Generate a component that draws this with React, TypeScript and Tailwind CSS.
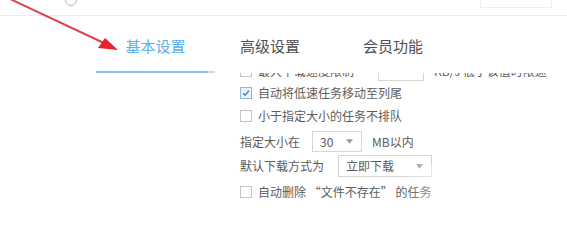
import React from "react";

const font = { fontFamily: '"Noto Sans CJK SC", "Noto Sans", sans-serif' };

function Check({ checked = false }: { checked?: boolean }) {
  return (
    <span
      className={`flex h-[12px] w-[12px] shrink-0 items-center justify-center border ${
        checked ? "border-[#8fb8dd] bg-[#eaf3fb]" : "border-[#c4c4c4] bg-white"
      }`}
    >
      {checked && (
        <svg viewBox="0 0 12 12" className="h-[10px] w-[10px]">
          <path d="M2.5 6.2 L5 8.6 L9.6 3.2" fill="none" stroke="#3d7fc4" strokeWidth="1.6" />
        </svg>
      )}
    </span>
  );
}

function Select({ value, width, height }: { value: string; width: string; height: string }) {
  return (
    <div className={`flex items-center justify-between border border-[#d6d6d6] bg-white pl-[7px] pr-[8px] ${width} ${height}`}>
      <span>{value}</span>
      <svg viewBox="0 0 8 5" className="h-[5px] w-[7px]">
        <path d="M0 0 L8 0 L4 5 Z" fill="#9a9a9a" />
      </svg>
    </div>
  );
}

export default function App() {
  return (
    <div className="relative h-[225px] w-[567px] overflow-hidden bg-white text-[12px] text-[#5c5c5c]" style={font}>
      <div className="flex h-[16px] items-start border-b border-[#ececec] bg-white">
        <div className="ml-[65px] -mt-[6px] h-[12px] w-[12px] rounded-full border-[1.5px] border-[#b8b8b8]" />
        <div className="ml-auto mr-[15px] h-[8px] w-[72px] border-b border-l border-r border-[#eeeeee]" />
      </div>

      <div className="relative flex h-[57px] items-center bg-white text-[15px]">
        <div className="ml-[96px] flex h-full w-[119px] items-center justify-center pt-[4px] text-[#5eaee8]">
          基本设置
        </div>
        <div className="ml-[25px] pt-[4px] text-[#505050]">高级设置</div>
        <div className="ml-[63px] pt-[4px] text-[#505050]">会员功能</div>
        <div className="absolute bottom-0 left-[96px] h-[2px] w-[112px] bg-[#8cc0ea]" />
        <div className="absolute bottom-0 left-[208px] h-[2px] w-[7px] bg-[#d8d8d8]" />
      </div>

      <div className="relative h-[152px] overflow-hidden">
        <div className="-mt-[13px] flex flex-col pl-[240px]">
          <div className="flex h-[22px] items-center gap-[6px]">
            <Check />
            <span className="w-[108px] whitespace-nowrap">最大下载速度限制</span>
            <div className="ml-[6px] h-[20px] w-[46px] shrink-0 border border-[#d6d6d6]" />
            <span className="ml-[4px] whitespace-nowrap">KB/s 低于该值时限速</span>
          </div>
          <div className="flex h-[22px] items-center gap-[6px]">
            <Check checked />
            <span>自动将低速任务移动至列尾</span>
          </div>
          <div className="flex h-[24px] items-center gap-[6px]">
            <Check />
            <span>小于指定大小的任务不排队</span>
          </div>
          <div className="flex h-[27px] items-center">
            <span className="w-[72px]">指定大小在</span>
            <Select value="30" width="w-[50px]" height="h-[21px]" />
            <span className="ml-[10px]">MB以内</span>
          </div>
          <div className="flex h-[22px] items-center">
            <span className="w-[98px]">默认下载方式为</span>
            <Select value="立即下载" width="w-[94px]" height="h-[22px]" />
          </div>
          <div className="flex h-[30px] items-center gap-[6px]">
            <Check />
            <span className="whitespace-nowrap">自动删除 “文件不存在” 的任务</span>
          </div>
        </div>
        <div className="absolute bottom-0 left-[402px] top-[92px] w-[165px] bg-gradient-to-r from-transparent via-white to-white" />
      </div>

      <svg className="pointer-events-none absolute left-0 top-0" width="567" height="225">
        <line x1="8" y1="-2" x2="106" y2="44" stroke="#d9464c" strokeWidth="2" />
        <path d="M118 50 L98 48 L105 38 Z" fill="#e8222b" />
      </svg>
    </div>
  );
}
